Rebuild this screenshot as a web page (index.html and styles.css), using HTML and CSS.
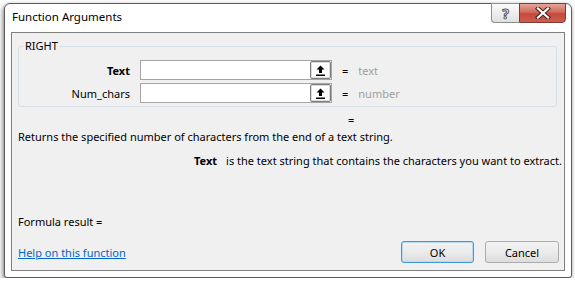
FILE: index.html
```html
<!DOCTYPE html>
<html lang="en">
<head>
    <meta charset="UTF-8">
    <title>Function Arguments</title>
    <link rel="stylesheet" href="styles.css">
</head>
<body>
    <div class="window">
        <div class="titlebar">
            <span class="title">Function Arguments</span>
            <div class="caption-buttons">
                <button class="cap-btn help-btn">?</button>
                <button class="cap-btn close-btn">
                    <svg width="16" height="12" viewBox="0 0 16 12">
                        <path d="M3 1.5 L13 10.5 M13 1.5 L3 10.5" stroke="#4a1f1f" stroke-width="4.2" stroke-linecap="square"/>
                        <path d="M3 1.5 L13 10.5 M13 1.5 L3 10.5" stroke="#fff" stroke-width="2.2" stroke-linecap="square"/>
                    </svg>
                </button>
            </div>
        </div>

        <div class="client">
            <fieldset class="group">
                <legend>RIGHT</legend>

                <div class="arg-row">
                    <label class="arg-label bold">Text</label>
                    <div class="arg-input">
                        <button class="ref-btn">
                            <svg width="9" height="11" viewBox="0 0 9 11">
                                <path d="M4.5 0.5 L8.5 4.5 L6 4.5 L6 8 L3 8 L3 4.5 L0.5 4.5 Z" fill="#000"/>
                                <rect x="0" y="9.5" width="9" height="1.5" fill="#000"/>
                            </svg>
                        </button>
                    </div>
                    <span class="eq">=</span>
                    <span class="arg-value">text</span>
                </div>

                <div class="arg-row">
                    <label class="arg-label">Num_chars</label>
                    <div class="arg-input">
                        <button class="ref-btn">
                            <svg width="9" height="11" viewBox="0 0 9 11">
                                <path d="M4.5 0.5 L8.5 4.5 L6 4.5 L6 8 L3 8 L3 4.5 L0.5 4.5 Z" fill="#000"/>
                                <rect x="0" y="9.5" width="9" height="1.5" fill="#000"/>
                            </svg>
                        </button>
                    </div>
                    <span class="eq">=</span>
                    <span class="arg-value">number</span>
                </div>
            </fieldset>

            <div class="result-eq">=</div>
            <p class="desc">Returns the specified number of characters from the end of a text string.</p>
            <p class="arg-desc"><b>Text</b><span>is the text string that contains the characters you want to extract.</span></p>

            <div class="spacer"></div>

            <div class="formula">Formula result =</div>

            <div class="footer">
                <a href="#" class="help-link">Help on this function</a>
                <div class="dialog-buttons">
                    <button class="btn btn-default">OK</button>
                    <button class="btn">Cancel</button>
                </div>
            </div>
        </div>
    </div>
</body>
</html>
```

FILE: styles.css
```css
body {
    margin: 0;
    background-color: #ffffff;
    font-family: "Noto Sans", "Open Sans", sans-serif;
    font-size: 11px;
    color: #000;
}

.window {
    box-sizing: border-box;
    width: 568px;
    height: 275px;
    margin: 3px 0 0 4px;
    border: 1px solid #5c5c5c;
    border-radius: 6px 6px 3px 3px;
    background-color: #ffffff;
    box-shadow: -1px 2px 5px rgba(0, 0, 0, 0.55);
    display: flex;
    flex-direction: column;
}

.titlebar {
    height: 28px;
    display: flex;
    justify-content: space-between;
    align-items: flex-start;
    flex-shrink: 0;
}

.title {
    padding: 4px 0 0 7px;
    line-height: 17px;
    font-size: 11.5px;
    color: #000;
}

.caption-buttons {
    display: flex;
    margin: -1px 5px 0 0;
}

.cap-btn {
    box-sizing: border-box;
    height: 20px;
    padding: 0;
    display: flex;
    align-items: center;
    justify-content: center;
    font-family: inherit;
}

.help-btn {
    width: 28px;
    border: 1px solid #8d8d8d;
    border-right: none;
    border-radius: 0 0 0 4px;
    background: linear-gradient(#fbfbfb, #eeeeee 50%, #e0e0e0);
    font-size: 14px;
    font-weight: bold;
    color: #ffffff;
    -webkit-text-stroke: 1px #5a5a5a;
}

.close-btn {
    width: 47px;
    border: 1px solid #7e3a34;
    border-radius: 0 0 4px 0;
    background: linear-gradient(#e4a598, #d26a5c 45%, #c24a3c 55%, #cc5e4c);
}

.client {
    flex: 1;
    margin: 0 6px 6px;
    border: 1px solid #7f7f7f;
    background-color: #f0f0f0;
    padding: 5px 5px 7px 6px;
    display: flex;
    flex-direction: column;
}

.group {
    margin: 0 2px 0 0;
    padding: 6px 0 3px;
    border: 1px solid #d6dfe6;
    border-radius: 3px;
    display: flex;
    flex-direction: column;
    gap: 3px;
}

.group legend {
    margin-left: 4px;
    padding: 0 2px;
    line-height: 16px;
}

.arg-row {
    height: 20px;
    display: flex;
    align-items: center;
}

.arg-label {
    width: 111px;
    margin-right: 10px;
    text-align: right;
}

.bold {
    font-weight: bold;
}

.arg-input {
    box-sizing: border-box;
    width: 192px;
    height: 20px;
    border: 1px solid #a5a5a5;
    background-color: #ffffff;
    display: flex;
    justify-content: flex-end;
}

.ref-btn {
    box-sizing: border-box;
    width: 21px;
    height: 18px;
    padding: 0;
    border: 1px solid #7d7d7d;
    box-shadow: inset 0 0 0 1px #dcdcdc;
    border-radius: 2px;
    background-color: #ffffff;
    display: flex;
    align-items: center;
    justify-content: center;
}

.eq {
    margin-left: 10px;
}

.arg-value {
    margin-left: 10px;
    color: #a0a0a0;
}

.result-eq {
    margin: 5px 0 0 330px;
    line-height: 15px;
}

.desc {
    margin: 2px 0 0;
    line-height: 16px;
    white-space: nowrap;
}

.arg-desc {
    margin: 8px 0 0;
    padding-left: 176px;
    line-height: 16px;
    white-space: nowrap;
    display: flex;
    gap: 9px;
}

.spacer {
    flex: 1;
}

.formula {
    line-height: 16px;
    margin-bottom: 11px;
}

.footer {
    display: flex;
    justify-content: space-between;
    align-items: center;
    height: 22px;
}

.help-link {
    color: #0066cc;
    text-decoration: underline;
}

.dialog-buttons {
    display: flex;
    gap: 11px;
}

.btn {
    box-sizing: border-box;
    width: 74px;
    height: 22px;
    padding: 0;
    border: 1px solid #acacac;
    border-radius: 3px;
    background: linear-gradient(#f2f2f2, #ebebeb 50%, #dddddd);
    font-family: inherit;
    font-size: 11px;
    color: #000;
}

.btn-default {
    width: 73px;
    border-color: #3c9ad6;
    box-shadow: inset 0 0 0 1px #b5daf2;
}
```
